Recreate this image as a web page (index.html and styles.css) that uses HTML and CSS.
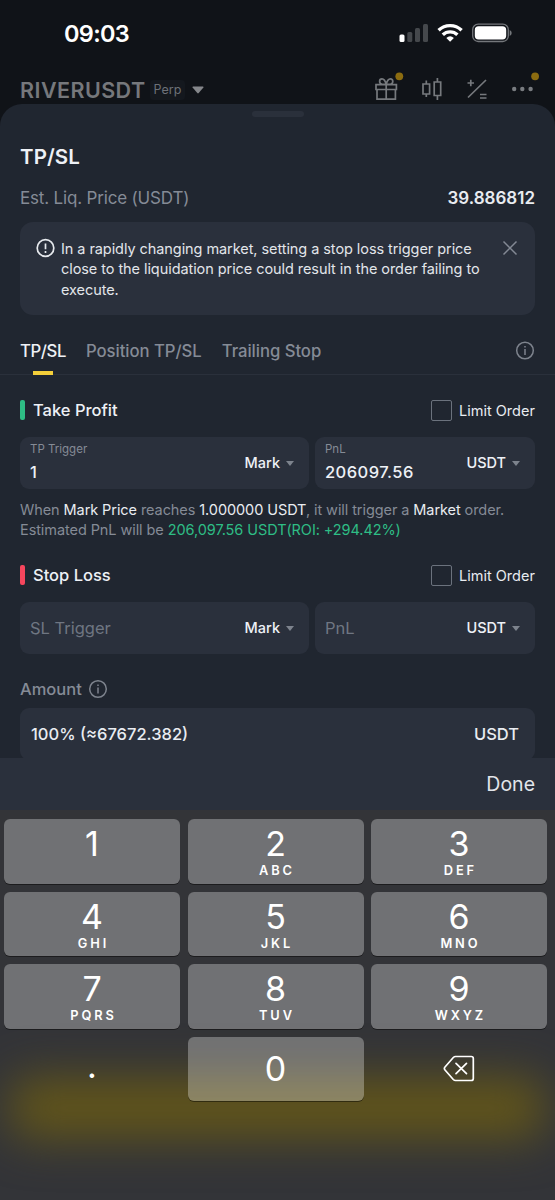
FILE: index.html
```html
<!DOCTYPE html>
<html lang="en">
<head>
<meta charset="utf-8">
<title>TP/SL</title>
<link rel="stylesheet" href="styles.css">
</head>
<body>
<div class="phone">
  <div class="status">
    <span class="time">09:03</span>
    <svg class="status-icons" width="114" height="22" viewBox="0 0 114 22">
      <g fill="#45484c"><rect x="8.300" y="9" width="5" height="10" rx="1.500"/><rect x="16" y="5" width="5" height="14" rx="1.500"/><rect x="24" y="1" width="5" height="18" rx="1.500"/></g>
      <rect x="0.500" y="11.500" width="5" height="7.500" rx="1.500" fill="#fff"/>
      <g fill="none" stroke="#fff" stroke-width="3.400"><path d="M39.600 7.300a16.500 16.500 0 0 1 23 0"/><path d="M43.800 11.800a10.500 10.500 0 0 1 14.600 0"/></g>
      <path d="M47.300 14.900a5.700 5.700 0 0 1 7.600 0L51.100 18.800z" fill="#fff"/>
      <rect x="73.700" y="1.200" width="35.600" height="17.300" rx="5.500" fill="none" stroke="#74777b" stroke-width="1.300"/>
      <rect x="75.800" y="3.300" width="31.400" height="13.200" rx="3.700" fill="#fff"/>
      <path d="M110.700 7v6q2-1 2-3t-2-3z" fill="#74777b"/>
    </svg>
  </div>
  <div class="header">
    <span class="symbol">RIVERUSDT</span>
    <span class="perp">Perp</span>
    <svg class="caret-big" width="12" height="8" viewBox="0 0 12 8"><path d="M1 .5h10q.8.300.4 1L6.700 7q-.7.800-1.400 0L.6 1.500Q.2.800 1 .5z" fill="#85878b"/></svg>
    <svg class="tools" width="166" height="34" viewBox="0 0 166 34" fill="none" stroke="#76797d" stroke-width="1.700">
      <path d="M3 15.700h20.400v4.800H3zM4 20.500V30.200h18.400V20.500M13.200 15.700v14.500M13.200 15.300c-1-4-2.500-5.400-4.200-5.400-3.200 0-3.200 4.700 0 5.400h8.400c3.200-.7 3.200-5.400 0-5.400-1.700 0-3.200 1.400-4.200 5.400"/>
      <path d="M50 15h6.600v10H50zM53.300 11.500V15M53.300 25v3M61.200 13h6.500v13.500h-6.500zM64.400 9v4M64.400 26.500V31"/>
      <path d="M95 28.500L113 11M94.500 14h6.500M97.800 10.800v6.500M107 25.500h6.500M107 29h6.500"/>
      <g fill="#797c80" stroke="none"><circle cx="141.200" cy="20" r="2.200"/><circle cx="149.300" cy="20" r="2.200"/><circle cx="157.600" cy="20" r="2.200"/></g>
      <g fill="#8c6c10" stroke="none"><circle cx="26.300" cy="7.300" r="3.900"/><circle cx="162.100" cy="7.300" r="3.900"/></g>
    </svg>
  </div>

  <main class="sheet">
    <div class="handle"></div>
    <h1 class="title">TP/SL</h1>
    <div class="row liq"><span class="liq-label">Est. Liq. Price (USDT)</span><span class="liq-value">39.886812</span></div>

    <section class="alert">
      <svg class="alert-icon" width="20" height="20" viewBox="0 0 20 20" fill="none" stroke="#e6e9ed" stroke-width="1.700"><circle cx="9.500" cy="10" r="8.300"/><path d="M9.500 5.400v5.900M9.500 13v1.900"/></svg>
      <p class="alert-text">In a rapidly changing market, setting a stop loss trigger price<br>close to the liquidation price could result in the order failing to<br>execute.</p>
      <svg class="close" width="16" height="16" viewBox="0 0 16 16" stroke="#838994" stroke-width="1.500"><path d="M1.500 1.500l13 13M14.500 1.500l-13 13"/></svg>
    </section>

    <nav class="tabs">
      <span class="tab active">TP/SL</span>
      <span class="tab">Position TP/SL</span>
      <span class="tab">Trailing Stop</span>
      <svg class="info" width="20" height="20" viewBox="0 0 20 20" fill="none" stroke="#7d838d" stroke-width="1.500"><circle cx="10" cy="9.500" r="8.300"/><path d="M10 8v6M10 4.900v1.700"/></svg>
    </nav>

    <div class="row section-head tp">
      <i class="bar green"></i><span class="section-name">Take Profit</span>
      <i class="check"></i><span class="limit">Limit Order</span>
    </div>
    <div class="fields">
      <div class="field">
        <div class="stack"><span class="mini">TP Trigger</span><span class="value">1</span></div>
        <span class="unit">Mark</span><i class="caret"></i>
      </div>
      <div class="field">
        <div class="stack"><span class="mini">PnL</span><span class="value wide">206097.56</span></div>
        <span class="unit">USDT</span><i class="caret"></i>
      </div>
    </div>
    <p class="hint">When <b>Mark Price</b> reaches <b>1.000000 USDT</b>, it will trigger a <b>Market</b> order.<br>Estimated PnL will be <em>206,097.56 USDT(ROI: +294.42%)</em></p>

    <div class="row section-head sl">
      <i class="bar red"></i><span class="section-name">Stop Loss</span>
      <i class="check"></i><span class="limit">Limit Order</span>
    </div>
    <div class="fields">
      <div class="field"><span class="placeholder">SL Trigger</span><span class="unit">Mark</span><i class="caret"></i></div>
      <div class="field"><span class="placeholder">PnL</span><span class="unit">USDT</span><i class="caret"></i></div>
    </div>

    <div class="row amount-head"><span class="amount">Amount</span>
      <svg width="20" height="20" viewBox="0 0 20 20" fill="none" stroke="#7d838d" stroke-width="1.500"><circle cx="10" cy="10" r="8.300"/><path d="M10 8.500v6M10 5.400v1.700"/></svg>
    </div>
    <div class="amount-field"><span class="amount-value">100% (≈67672.382)</span><span class="amount-unit">USDT</span></div>
  </main>

  <div class="accessory"><span class="done">Done</span></div>
  <div class="keyboard">
    <div class="glow"></div>
    <div class="keys">
      <div class="key"><span class="num">1</span><span class="abc"></span></div>
      <div class="key"><span class="num">2</span><span class="abc">ABC</span></div>
      <div class="key"><span class="num">3</span><span class="abc">DEF</span></div>
      <div class="key"><span class="num">4</span><span class="abc">GHI</span></div>
      <div class="key"><span class="num">5</span><span class="abc">JKL</span></div>
      <div class="key"><span class="num">6</span><span class="abc">MNO</span></div>
      <div class="key"><span class="num">7</span><span class="abc">PQRS</span></div>
      <div class="key"><span class="num">8</span><span class="abc">TUV</span></div>
      <div class="key"><span class="num">9</span><span class="abc">WXYZ</span></div>
      <div class="key plain point"><span class="num">.</span></div>
      <div class="key zero"><span class="num">0</span></div>
      <div class="key plain">
        <svg width="32" height="27" viewBox="0 0 32 27" fill="none" stroke="#fff" stroke-width="1.700" stroke-linecap="round" stroke-linejoin="round"><path d="M12.500 1.500H28.300q2 0 2 2V23.500q0 2-2 2H12.500q-1.200 0-2.200-1L2 15q-1.300-1.500 0-3L10.300 2.500q1-1 2.200-1"/><path d="M13 8.300L23.500 18.700M23.500 8.300L13 18.700"/></svg>
      </div>
    </div>
  </div>
</div>
</body>
</html>
```
FILE: styles.css
```css
* { box-sizing: border-box; }
body { margin: 0; background: #101318; font-family: Inter, "Liberation Sans", sans-serif; color: #e9ecf1; }
h1, p { margin: 0; font-weight: 400; }
i, em { font-style: normal; }
svg { display: block; flex: none; }
span { white-space: nowrap; }

.phone { width: 555px; height: 1200px; overflow: hidden; display: flex; flex-direction: column; background: #101318; }
.status { height: 68px; flex: none; display: flex; justify-content: space-between; padding: 23px 42px 0 64px; }
.time { font-size: 23.5px; line-height: 22px; font-weight: 600; letter-spacing: -.7px; color: #fff; }
.header { height: 36px; flex: none; display: flex; align-items: center; padding: 7px 16px 0 20px; }
.symbol { width: 130px; font-size: 21.5px; line-height: 24px; font-weight: 600; letter-spacing: .45px; color: #76787c; }
.perp { width: 35px; height: 20px; border-radius: 4px; background: #14181e; text-align: center; font-size: 12.5px; line-height: 20px; color: #6d7178; }
.caret-big { margin-left: 7px; }
.tools { margin: -7px 0 0 auto; }

.sheet { height: 654px; flex: none; overflow: hidden; background: #202630; border-radius: 22px 22px 0 0; padding: 7px 20px 0; }
.handle { width: 52px; height: 6px; border-radius: 3px; background: #2a303b; margin: 0 auto; }
.row { display: flex; align-items: center; }
.title { margin-top: 27px; font-size: 20.5px; line-height: 26px; font-weight: 600; letter-spacing: .1px; color: #eef1f6; }
.liq { height: 24px; margin-top: 16px; justify-content: space-between; font-size: 17px; }
.liq-label { color: #858b96; letter-spacing: -.17px; }
.liq-value { font-weight: 600; }

.alert { height: 93px; margin-top: 12px; padding: 16px 17px 0 16px; display: flex; background: #2a303c; border-radius: 13px; }
.alert-text { margin: .5px 0 0 5px; font-size: 14.5px; line-height: 20.7px; letter-spacing: -.07px; color: #e2e5ea; white-space: nowrap; }
.close { margin: 2px 0 0 auto; }

.tabs { height: 60px; margin: 0 -20px; padding: 12px 20px 0; display: flex; align-items: center; border-bottom: 1px solid #2a303b; font-size: 16.7px; font-weight: 500; color: #858b96; }
.tab { margin-right: 20px; letter-spacing: -.04px; }
.active { position: relative; letter-spacing: -.4px; color: #eef1f6; }
.active::after { content: ""; position: absolute; left: 13px; bottom: -14px; width: 20px; height: 4px; background: #f4cf3a; }
.info { margin-left: auto; }

.section-head { height: 22px; }
.tp { margin-top: 24px; }
.sl { margin-top: 24px; }
.bar { width: 5px; height: 20px; border-radius: 2px; }
.green { background: #2ebd85; }
.red { background: #f6465d; }
.section-name { margin-left: 8px; font-size: 16.5px; font-weight: 500; color: #eef1f6; }
.check { width: 21px; height: 21px; border: 1.500px solid #6b727d; border-radius: 2px; margin-left: auto; }
.limit { width: 76px; margin-left: 7px; font-size: 14.5px; }

.fields { display: grid; grid-template-columns: 289px 220px; justify-content: space-between; margin-top: 16px; }
.field { height: 52px; border-radius: 9px; background: #2a303c; display: flex; align-items: center; padding: 0 15px 0 10px; }
.stack { flex: 1; height: 52px; display: flex; flex-direction: column; padding-top: 4px; }
.mini { font-size: 11.5px; line-height: 16px; color: #858b96; }
.value { font-size: 16.5px; line-height: 22px; margin-top: 4px; font-weight: 500; color: #eef1f6; }
.wide { letter-spacing: .45px; }
.placeholder { flex: 1; font-size: 16.5px; color: #6f7682; }
.unit { font-size: 14.5px; line-height: 18px; font-weight: 500; color: #eef1f6; }
.caret { margin-left: 6px; border: 4.500px solid transparent; border-top: 5.500px solid #7d838d; border-bottom: 0; }
.hint { margin-top: 11px; font-size: 14.5px; line-height: 20px; letter-spacing: -.08px; color: #858b96; }
.hint b { font-weight: 400; color: #e9ecf1; }
.hint em { color: #2ebd85; }

.amount-head { height: 24px; margin-top: 23px; gap: 6px; }
.amount { font-size: 16.5px; font-weight: 500; color: #858b96; }
.amount-field { height: 52px; margin-top: 7px; padding: 0 16px 0 11px; display: flex; align-items: center; justify-content: space-between; background: #2a303c; border-radius: 9px; font-size: 16.5px; font-weight: 500; }

.accessory { height: 52px; flex: none; display: flex; align-items: center; justify-content: flex-end; padding-right: 20px; background: #2a303c; }
.done { font-size: 19.5px; color: #e2e5ea; }
.keyboard { position: relative; flex: 1; background: #333438; overflow: hidden; padding: 9px 8px 0 4px; }
.glow { position: absolute; left: 10px; right: 10px; top: 268px; height: 60px; border-radius: 20px; background: #635619; filter: blur(23px); }
.keys { position: relative; display: grid; grid-template-columns: repeat(3, 176px); justify-content: space-between; row-gap: 8px; }
.key { height: 64.500px; border-radius: 6px; background: rgba(255,255,255,.3); box-shadow: 0 1px 0 rgba(0,0,0,.45); display: flex; flex-direction: column; align-items: center; color: #fff; padding-top: 8px; }
.num { font-size: 34px; line-height: 34px; font-weight: 400; }
.abc { height: 16px; margin-top: 2px; font-size: 12.8px; line-height: 16px; font-weight: 600; letter-spacing: 2.900px; margin-right: -2.900px; }
.zero { padding-top: 15px; }
.plain { background: none; box-shadow: none; padding-top: 0; justify-content: center; }
.point { padding-bottom: 6px; }
```
